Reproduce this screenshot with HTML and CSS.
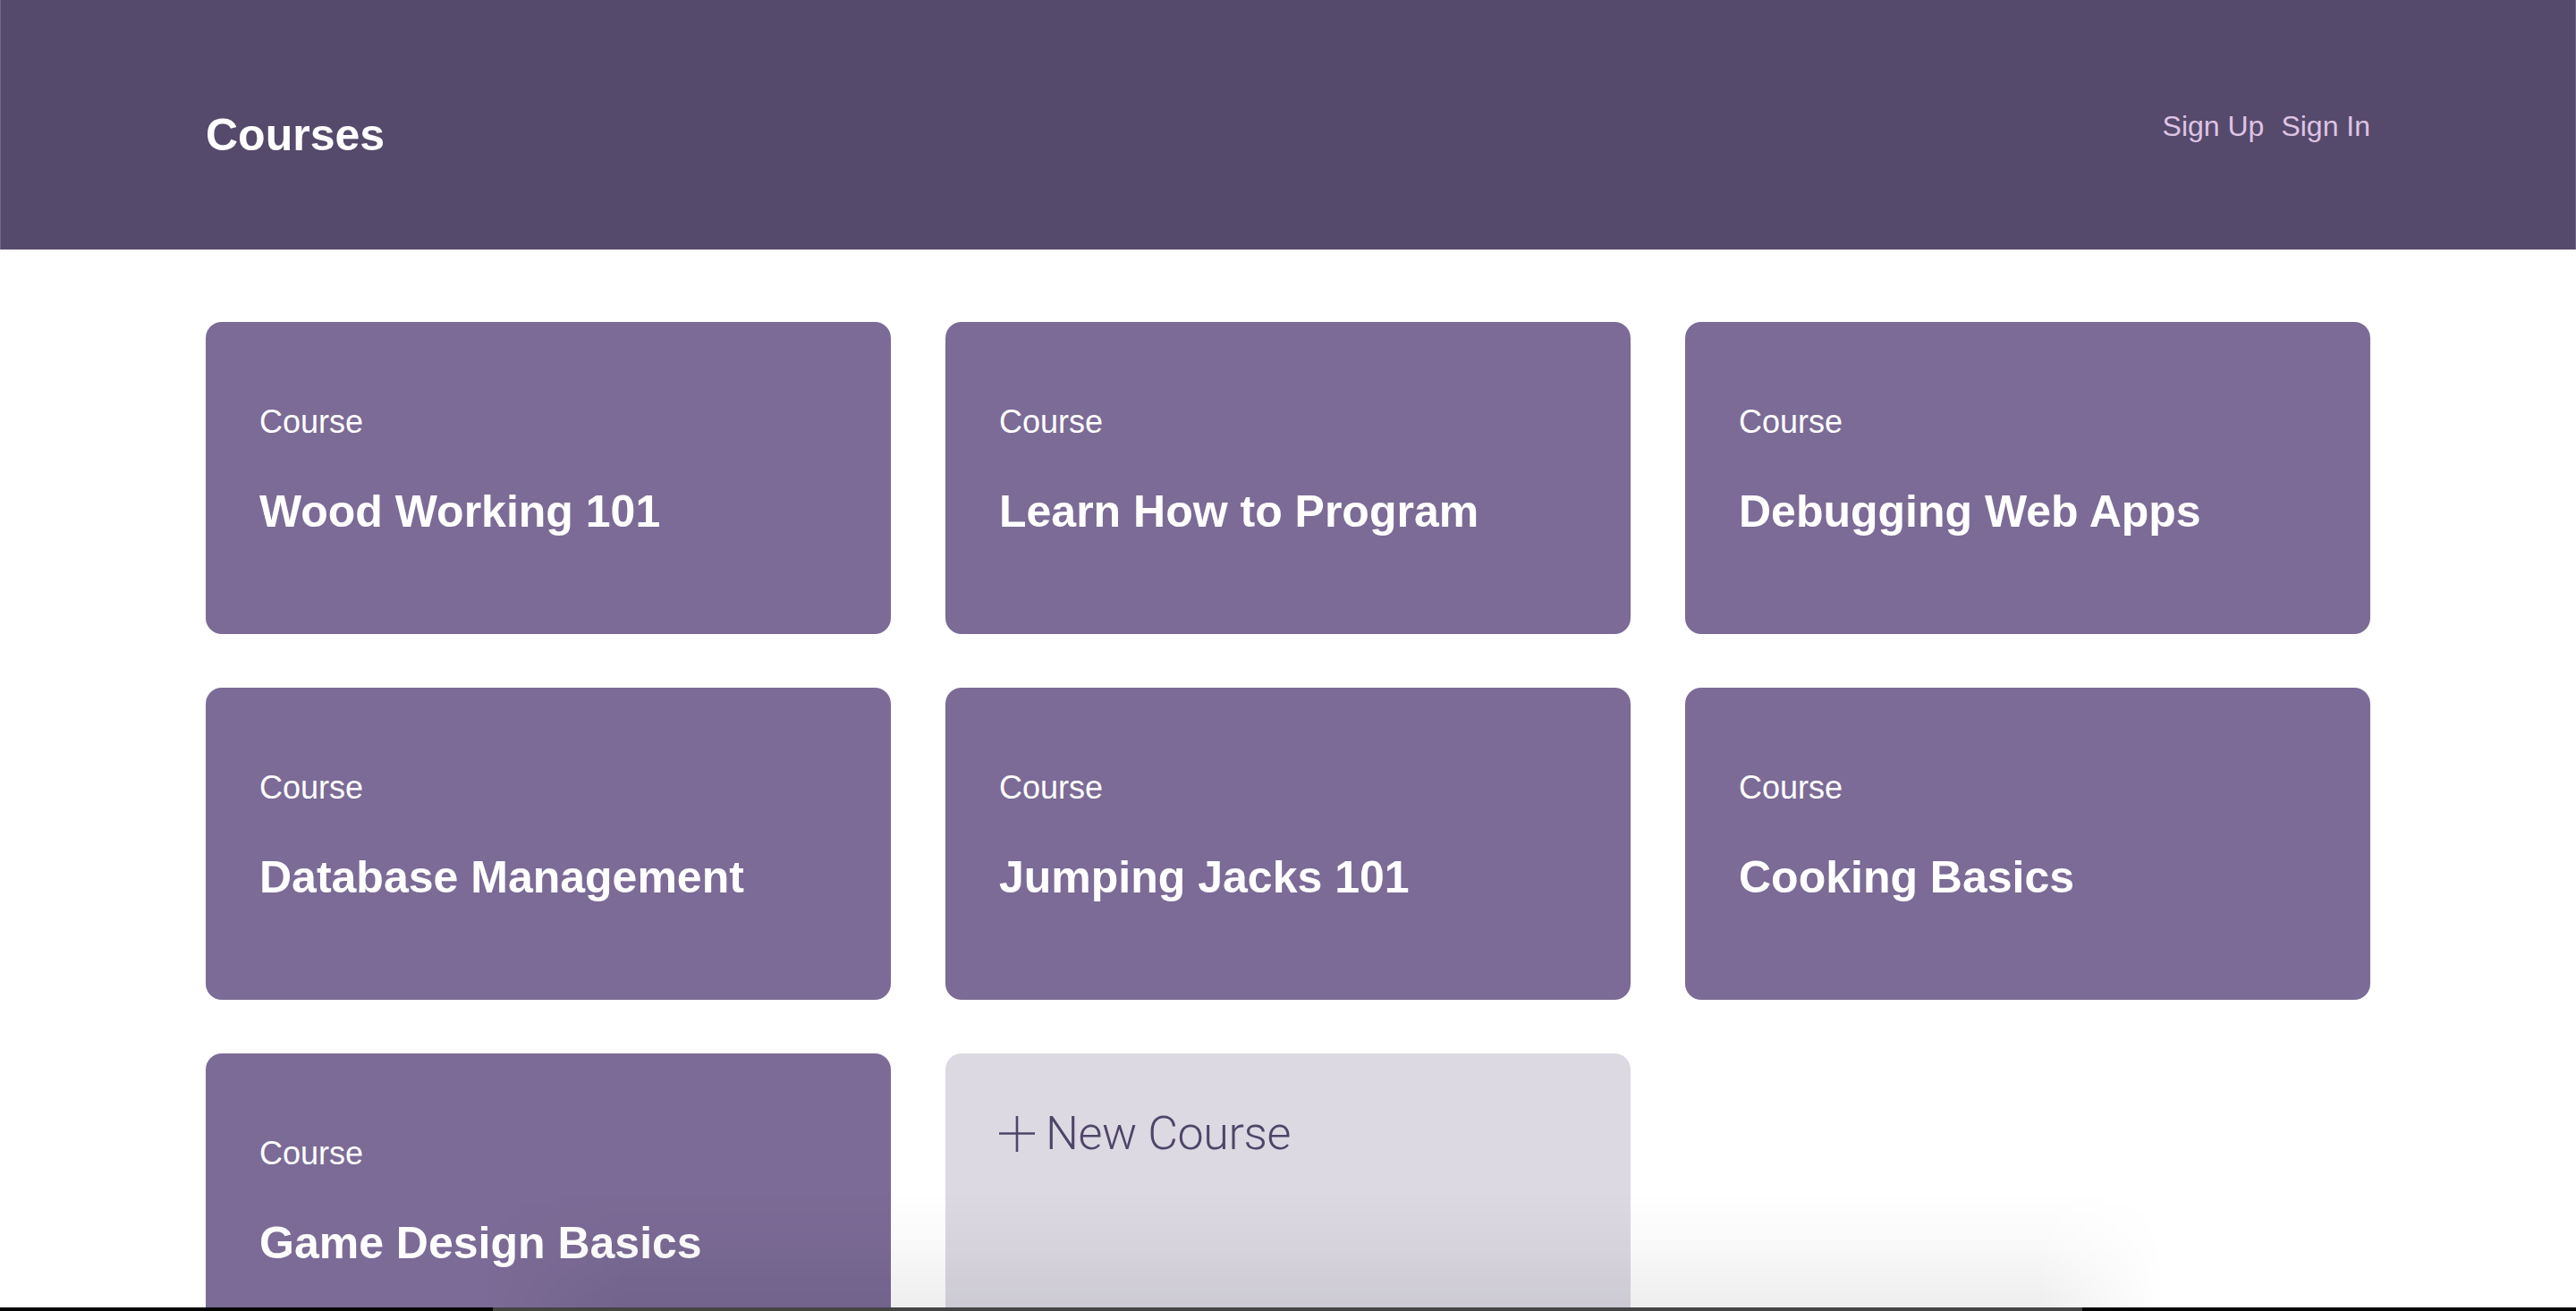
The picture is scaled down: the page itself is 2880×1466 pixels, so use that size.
FILE: index.html
```html
<!DOCTYPE html>
<html lang="en">
<head>
<meta charset="utf-8">
<title>Courses</title>
<link rel="stylesheet" href="styles.css">
</head>
<body>
<header class="header">
  <div class="header-inner">
    <h1 class="brand">Courses</h1>
    <nav class="auth">
      <a class="auth-link" href="#">Sign Up</a>
      <a class="auth-link" href="#">Sign In</a>
    </nav>
  </div>
</header>
<main class="main">
  <div class="grid">
    <a class="card" href="#"><span class="card-label">Course</span><h3 class="card-title">Wood Working 101</h3></a>
    <a class="card" href="#"><span class="card-label">Course</span><h3 class="card-title">Learn How to Program</h3></a>
    <a class="card" href="#"><span class="card-label">Course</span><h3 class="card-title">Debugging Web Apps</h3></a>
    <a class="card" href="#"><span class="card-label">Course</span><h3 class="card-title">Database Management</h3></a>
    <a class="card" href="#"><span class="card-label">Course</span><h3 class="card-title">Jumping Jacks 101</h3></a>
    <a class="card" href="#"><span class="card-label">Course</span><h3 class="card-title">Cooking Basics</h3></a>
    <a class="card" href="#"><span class="card-label">Course</span><h3 class="card-title">Game Design Basics</h3></a>
    <a class="card card-new" href="#">
      <span class="new-row">
        <svg class="plus" width="40" height="40" viewBox="0 0 40 40" aria-hidden="true"><path d="M20 0V40M0 19.5H40" stroke="#4f4569" stroke-width="2.6" fill="none"/></svg>
        <span class="new-text">New Course</span>
      </span>
    </a>
  </div>
</main>
<div class="win-shadow"></div>
<div class="win-bottom"><span class="wb-black"></span><span class="wb-gray"></span><span class="wb-black2"></span></div>
</body>
</html>
```
FILE: styles.css
```css
html, body {
  margin: 0;
  padding: 0;
  height: 100%;
  overflow: hidden;
  background: #ffffff;
}
body {
  font-family: "Liberation Sans", Arial, Helvetica, sans-serif;
  position: relative;
}
.header {
  background: #554a6c;
  height: 279px;
  box-sizing: border-box;
  border-left: 1px solid #6f6688;
  border-right: 1px solid #6f6688;
}
.header-inner {
  width: 2420px;
  margin: 0 auto;
  padding-top: 123px;
  display: flex;
  justify-content: space-between;
  align-items: flex-start;
}
.brand {
  margin: 0;
  font-size: 50px;
  line-height: 1.15;
  font-weight: 700;
  color: #ffffff;
}
.auth {
  display: flex;
  gap: 19px;
}
.auth-link {
  font-size: 32px;
  line-height: 1.15;
  color: #dfc3e4;
  text-decoration: none;
}
.main {
  padding-top: 81px;
}
.grid {
  width: 2420px;
  margin: 0 auto;
  display: grid;
  grid-template-columns: repeat(3, 1fr);
  column-gap: 61px;
  row-gap: 60px;
}
.card {
  display: block;
  box-sizing: border-box;
  height: 349px;
  padding: 91px 60px 0 60px;
  border-radius: 18px;
  background: #7b6b96;
  color: #ffffff;
  text-decoration: none;
}
.card-label {
  display: block;
  font-size: 36px;
  line-height: 1.15;
  font-weight: 400;
}
.card-title {
  margin: 52px 0 0 0;
  font-size: 50px;
  line-height: 1.15;
  font-weight: 700;
}
.card-new {
  background: #dcd9e3;
  padding: 64px 60px 0 60px;
}
.new-row {
  display: flex;
  align-items: center;
  gap: 12px;
}
.plus {
  display: block;
  flex: none;
}
.new-text {
  font-family: Roboto, "Liberation Sans", sans-serif;
  font-weight: 300;
  font-size: 52px;
  line-height: 1;
  color: #4f4569;
  letter-spacing: -0.4px;
}
.win-shadow {
  position: absolute;
  left: 540px;
  width: 1880px;
  bottom: 4px;
  height: 130px;
  background: linear-gradient(to bottom, rgba(0,0,0,0), rgba(0,0,0,0.02) 40%, rgba(0,0,0,0.065));
  -webkit-mask-image: linear-gradient(to right, transparent 0, #000 160px, #000 1740px, transparent 1880px);
  mask-image: linear-gradient(to right, transparent 0, #000 160px, #000 1740px, transparent 1880px);
  pointer-events: none;
}
.win-bottom {
  position: absolute;
  left: 0;
  right: 0;
  bottom: 0;
  height: 4px;
  display: flex;
}
.wb-black {
  width: 551px;
  background: #050505;
}
.wb-gray {
  width: 1777px;
  background: #444444;
}
.wb-black2 {
  flex: 1;
  background: #050505;
}
```
